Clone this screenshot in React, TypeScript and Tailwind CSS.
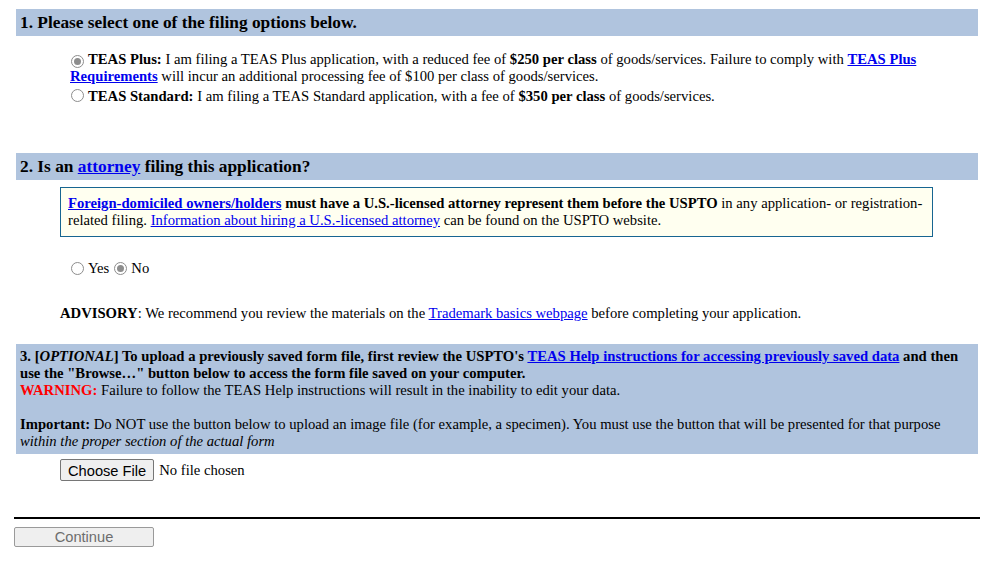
import React from "react";

const Radio = ({ checked = false }: { checked?: boolean }) => (
  <span className="inline-flex w-[13px] h-[13px] rounded-full border border-[#8d8d8d] bg-white items-center justify-center align-[-1px] mr-[4px] ml-[1px]">
    {checked && <span className="w-[7px] h-[7px] rounded-full bg-[#8d8d8d]"></span>}
  </span>
);

const A = ({ children, bold = false }: { children: React.ReactNode; bold?: boolean }) => (
  <a href="#" className={`text-[#0000ee] underline ${bold ? "font-bold" : ""}`}>
    {children}
  </a>
);

export default function App() {
  return (
    <div className="w-[984px] min-h-[564px] bg-white text-black text-[14.67px] font-['Liberation_Serif','Times_New_Roman',serif] pl-[14px] pr-[4px] pt-[9px]">
      {/* section 1 */}
      <div className="mx-[2px] h-[27px] bg-[#b0c4de] flex items-center pl-[4px] text-[17.33px] font-bold">
        1. Please select one of the filing options below.
      </div>

      <div className="ml-[56px] mr-[40px] mt-[15px] leading-[17px]">
        <div>
          <Radio checked />
          <b>TEAS Plus:</b> I am filing a TEAS Plus application, with a reduced fee of{" "}
          <b>$250 per class</b> of goods/services. Failure to comply with{" "}
          <A bold>TEAS Plus Requirements</A> will incur an additional processing fee of $100 per
          class of goods/services.
        </div>
        <div className="mt-[3px]">
          <Radio />
          <b>TEAS Standard:</b> I am filing a TEAS Standard application, with a fee of{" "}
          <b>$350 per class</b> of goods/services.
        </div>
      </div>

      {/* section 2 */}
      <div className="mx-[2px] mt-[48px] h-[27px] bg-[#b0c4de] flex items-center pl-[4px] text-[17.33px] font-bold">
        <span>
          2. Is an <A>attorney</A> filing this application?
        </span>
      </div>

      <div className="ml-[46px] w-[873px] mt-[7px] border border-[#176591] bg-[#fffff0] px-[7px] py-[7px] leading-[17px]">
        <A bold>Foreign-domiciled owners/holders</A>{" "}
        <b>must have a U.S.-licensed attorney represent them before the USPTO</b> in any
        application- or registration-related filing.{" "}
        <A>Information about hiring a U.S.-licensed attorney</A> can be found on the USPTO
        website.
      </div>

      <div className="ml-[56px] mt-[23px] leading-[17px] flex items-center">
        <Radio />
        <span className="mr-[4px]">Yes</span>
        <Radio checked />
        <span>No</span>
      </div>

      <div className="ml-[46px] mt-[28px] leading-[17px]">
        <b>ADVISORY</b>: We recommend you review the materials on the{" "}
        <A>Trademark basics webpage</A> before completing your application.
      </div>

      {/* section 3 */}
      <div className="mx-[2px] mt-[22px] bg-[#b0c4de] p-[4px] leading-[17px]">
        <div className="font-bold">
          3. [<i>OPTIONAL</i>] To upload a previously saved form file, first review the USPTO's{" "}
          <A bold>TEAS Help instructions for accessing previously saved data</A> and then use the
          "Browse…" button below to access the form file saved on your computer.
        </div>
        <div>
          <b className="text-[#ff0000]">WARNING:</b> Failure to follow the TEAS Help instructions
          will result in the inability to edit your data.
        </div>
        <div className="h-[17px]"></div>
        <div>
          <b>Important:</b> Do NOT use the button below to upload an image file (for example, a
          specimen). You must use the button that will be presented for that purpose{" "}
          <i>within the proper section of the actual form</i>
        </div>
      </div>

      <div className="ml-[46px] mt-[5px] flex items-center">
        <button className="h-[22px] px-[7px] border border-[#767676] rounded-[2px] bg-[#efefef] text-[14.67px] font-['Liberation_Sans',Arial,sans-serif] text-black">
          Choose File
        </button>
        <span className="ml-[5px]">No file chosen</span>
      </div>

      <div className="mt-[36px] h-[2px] bg-black"></div>

      <button className="mt-[8px] w-[140px] h-[20px] border border-[#9a9a9a] rounded-[2px] bg-[#efefef] text-[14.67px] font-['Liberation_Sans',Arial,sans-serif] text-[#6d6d6d] flex items-center justify-center">
        Continue
      </button>
    </div>
  );
}
